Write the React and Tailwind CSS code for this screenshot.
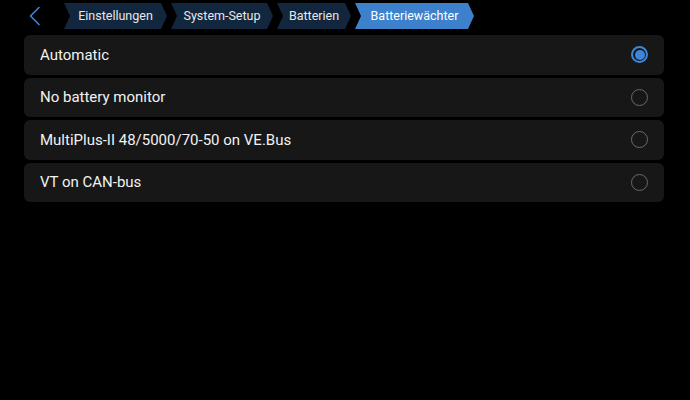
import { useState } from 'react';

const crumbs = [
  { label: 'Einstellungen', w: 'w-[103px]' },
  { label: 'System-Setup', w: 'w-[102px]' },
  { label: 'Batterien', w: 'w-[74px]' },
  { label: 'Batteriewächter', w: 'w-[119px]' },
];

const options = [
  'Automatic',
  'No battery monitor',
  'MultiPlus-II 48/5000/70-50 on VE.Bus',
  'VT on CAN-bus',
];

const Radio = ({ checked }) =>
  checked ? (
    <span className="w-[17px] h-[17px] rounded-full border-2 border-[#3f86d8] flex items-center justify-center">
      <span className="w-[10px] h-[10px] rounded-full bg-[#3f86d8]" />
    </span>
  ) : (
    <span className="w-[17px] h-[17px] rounded-full border-[1.5px] border-[#6a6a6a]" />
  );

const App = () => {
  const [selected, setSelected] = useState(0);

  return (
    <div className="w-[690px] h-[400px] bg-black overflow-hidden font-['Roboto',sans-serif]">
      {/* Header: back button + breadcrumb trail */}
      <div className="flex items-center h-[32px] pt-[3px] pb-[3px]">
        <button className="w-[64px] h-[26px] flex items-center pl-[28px]">
          <svg width="14" height="20" viewBox="0 0 14 20" fill="none">
            <path d="M11 1.5L2.5 10L11 18.5" stroke="#3f86d8" strokeWidth="1.6" strokeLinecap="round" strokeLinejoin="round" />
          </svg>
        </button>
        <div className="flex h-[26px] gap-[4px]">
          {crumbs.map((c, i) => {
            const last = i === crumbs.length - 1;
            return (
              <div
                key={c.label}
                className={`${c.w} h-full flex items-center justify-center text-[12.5px] [clip-path:polygon(0_0,calc(100%-6px)_0,100%_50%,calc(100%-6px)_100%,0_100%,6px_50%)] ${
                  last ? 'bg-[#3d80cc] text-white' : 'bg-[#12263e] text-[#e8e8e8]'
                }`}
              >
                {c.label}
              </div>
            );
          })}
        </div>
      </div>

      {/* Option list */}
      <div className="flex flex-col gap-[3px] ml-[24px] w-[640px] mt-[3px]">
        {options.map((o, i) => (
          <button
            key={o}
            onClick={() => setSelected(i)}
            className="h-[39.5px] rounded-[6px] bg-[#171717] flex items-center justify-between pl-[16px] pr-[16px] text-left"
          >
            <span className="text-[15px] text-[#f2f2f2]">{o}</span>
            <Radio checked={selected === i} />
          </button>
        ))}
      </div>
    </div>
  );
};

export default App;
